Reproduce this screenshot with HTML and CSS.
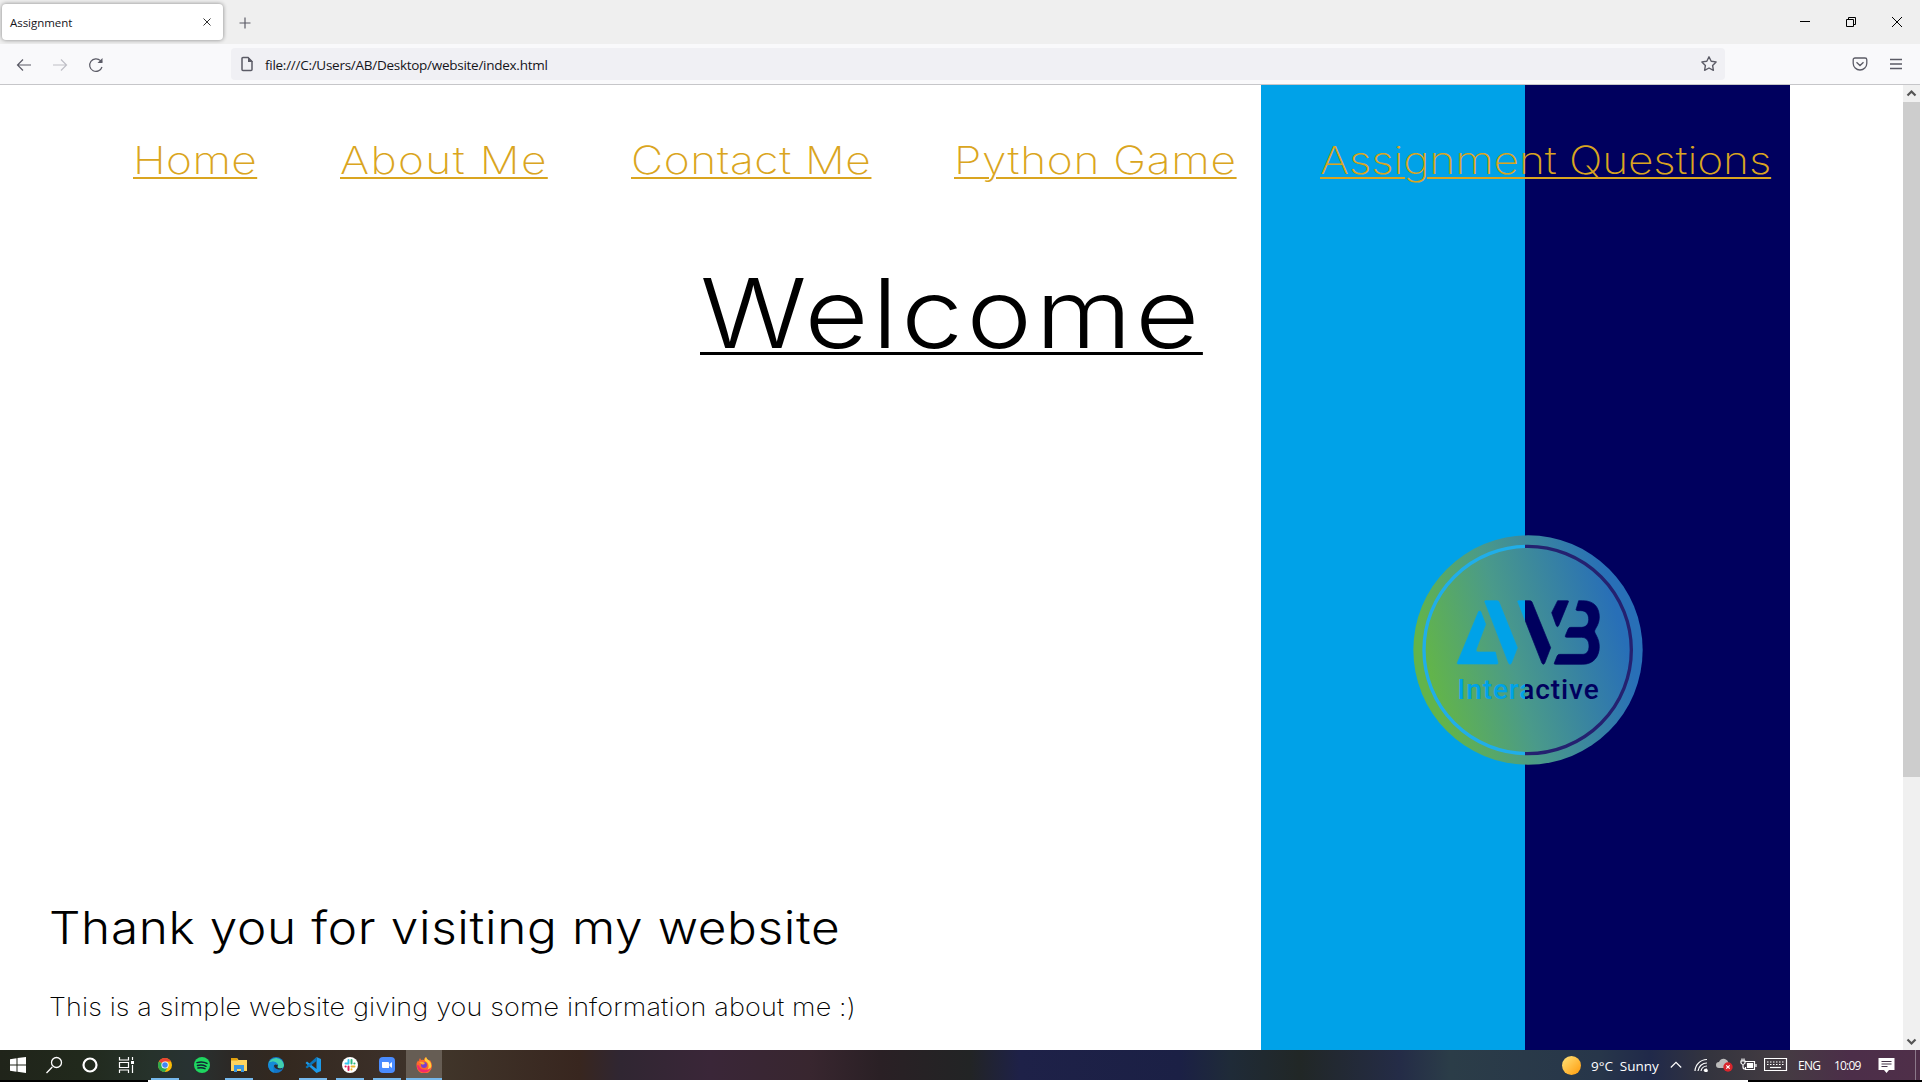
FILE: index.html
```html
<!DOCTYPE html>
<html lang="en">
<head>
<meta charset="utf-8">
<title>Assignment</title>
<link rel="stylesheet" href="styles.css">
</head>
<body>
<div class="screen">
  <header class="tabbar">
    <div class="tab"><span>Assignment</span>
      <svg width="10" height="10" viewBox="0 0 10 10" class="line dark"><path d="M1.5 1.5l7 7M8.500 1.500l-7 7"/></svg>
    </div>
    <svg class="newtab line" width="12" height="12" viewBox="0 0 12 12"><path d="M6 .5v11M.5 6h11"/></svg>
    <div class="winctl">
      <svg width="12" height="12" viewBox="0 0 12 12"><path d="M1 5.500h10"/></svg>
      <svg width="12" height="12" viewBox="0 0 12 12"><path d="M1.500 3.500h7v7h-7zM3.500 3.500v-2h7v7h-2"/></svg>
      <svg width="12" height="12" viewBox="0 0 12 12"><path d="M1 1l10 10M11 1L1 11"/></svg>
    </div>
  </header>
  <div class="toolbar">
    <div class="navbtns">
      <svg class="line" width="16" height="16" viewBox="0 0 16 16"><path d="M15 8H1.500M7 2.500L1.500 8 7 13.500"/></svg>
      <svg class="line off" width="16" height="16" viewBox="0 0 16 16"><path d="M1 8h13.500M9 2.500L14.500 8 9 13.500"/></svg>
      <svg class="line" width="16" height="16" viewBox="0 0 16 16"><path d="M14 10a6.300 6.300 0 1 1-1.500-6.300L14 5"/><path d="M14.500 1v5h-5z" fill="#5b5b66" stroke="none"/></svg>
    </div>
    <div class="urlbar">
      <svg class="line" width="14" height="16" viewBox="0 0 14 16"><path d="M3 1.500h5L12 5.500v8a1 1 0 0 1-1 1H3a1 1 0 0 1-1-1v-11a1 1 0 0 1 1-1z" stroke-width="1.500"/><path d="M8 1v5h5z" fill="#5b5b66" stroke="none"/></svg>
      <span>file:///C:/Users/AB/Desktop/website/index.html</span>
      <svg class="line star" width="18" height="18" viewBox="0 0 18 18"><path d="M9 1.800l2.200 4.400 4.900.7-3.500 3.500.8 4.900-4.400-2.300-4.400 2.300.8-4.900L1.900 6.900l4.900-.7z" stroke-width="1.400" stroke-linejoin="round"/></svg>
    </div>
    <div class="tools">
      <svg class="line" width="16" height="16" viewBox="0 0 16 16"><path d="M3 2h10a1.800 1.800 0 0 1 1.800 1.800v3.400a6.800 6.800 0 0 1-13.600 0V3.800A1.800 1.800 0 0 1 3 2zM4.500 6.200L8 9.500l3.500-3.300" stroke-width="1.300"/></svg>
      <svg class="line" width="14" height="16" viewBox="0 0 14 16"><path d="M1 3.500h12M1 8h12M1 12.500h12" stroke-width="1.400"/></svg>
    </div>
  </div>
  <div class="viewport">
    <main class="page">
      <nav class="menu">
        <a class="m1">Home</a><a class="m2">About Me</a><a class="m3">Contact Me</a><a class="m4">Python Game</a><a class="m5">Assignment Questions</a>
      </nav>
      <h1>Welcome</h1>
      <svg class="logo" width="280" height="280" viewBox="0 0 840 840">
        <defs>
          <linearGradient id="disc" gradientUnits="userSpaceOnUse" x1="125" y1="500" x2="690" y2="345"><stop offset="0" stop-color="#62b44b"/><stop offset=".42" stop-color="#4a9a8a"/><stop offset="1" stop-color="#286fb7"/></linearGradient>
          <linearGradient id="split" gradientUnits="userSpaceOnUse" x1="0" y1="0" x2="840" y2="0"><stop offset=".4828" stop-color="#00a2e8"/><stop offset=".4828" stop-color="#00005e"/></linearGradient>
          <linearGradient id="ring" gradientUnits="userSpaceOnUse" x1="0" y1="0" x2="840" y2="0"><stop offset=".4828" stop-color="#20aee9"/><stop offset=".4828" stop-color="#242170"/></linearGradient>
        </defs>
        <circle cx="414" cy="420" r="344" fill="url(#disc)"/>
        <circle cx="413" cy="420" r="311" fill="none" stroke="url(#ring)" stroke-width="10"/>
        <g fill="url(#split)" stroke="url(#split)" stroke-width="2" stroke-linejoin="round">
          <path d="M266 304h6l15 39-28 74q-3 9 7 9h50l8 33q0 3-3 3H203q-2-1-1-4z"/>
          <path d="M284 274q0-2 4-2h32q5 0 7 4l55 137-18 47q-4 6-8 0z"/>
          <path d="M383 274q0-2 4-2h32q5 0 7 4l56 137-18 47q-4 6-8 0z"/>
          <path d="M503 272h30q4 0 2 4l-29 71q-4 6-7 0l-14-39z"/>
          <path d="M566 272h12c38 0 50 24 50 49 0 24-14 35-14 43 0 8 14 20 14 46 0 30-18 53-50 53h-82q-5 0-3-4l8-20q2-6 8-6h68c14 0 20-10 20-25 0-16-8-26-23-26h-44q-6 0-4-5l8-19q2-6 8-6h32c16 0 22-11 22-24 0-17-9-26-24-26h-8q-5 0-6-3z"/>
        </g>
        <text x="202" y="566" textLength="424" font-size="84" font-weight="500" fill="url(#split)">Interactive</text>
      </svg>
      <h2>Thank you for visiting my website</h2>
      <p>This is a simple website giving you some information about me :)</p>
    </main>
    <aside class="scroll">
      <svg width="17" height="17" viewBox="0 0 17 17"><path d="M4.500 10.500l4-4 4 4"/></svg>
      <div class="thumb"></div>
      <svg class="down" width="17" height="17" viewBox="0 0 17 17"><path d="M4.500 6.500l4 4 4-4"/></svg>
    </aside>
  </div>
  <footer class="taskbar">
    <div class="apps">
      <i class="sys"><svg width="16" height="16" viewBox="0 0 16 16"><path fill="#fff" d="M0 2.300l6.500-1v6.200H0zM7.500 1.100L16 0v7.500H7.500zM0 8.500h6.500v6.200L0 13.700zM7.500 8.500H16V16l-8.500-1.200z"/></svg></i>
      <i class="sys"><svg width="18" height="18" viewBox="0 0 18 18"><path d="M7.300 11L1.500 17M11.500 1.500a5 5 0 1 1 0 10 5 5 0 0 1 0-10z" stroke="#fff" stroke-width="1.300" fill="none"/></svg></i>
      <i class="sys"><svg width="16" height="16" viewBox="0 0 16 16"><circle cx="8" cy="8" r="6.500" stroke="#fff" stroke-width="2.200" fill="none"/></svg></i>
      <i class="sys"><svg width="17" height="16" viewBox="0 0 17 16"><path d="M1.500 0v3h9V0M1.500 16v-3h9v3M1.500 5.500h9v5h-9zM14.500 0v3M14.500 8v8" stroke="#fff" stroke-width="1.200" fill="none"/><path d="M13 4h3v3h-3z" fill="#fff"/></svg></i>
      <i class="on chrome"><svg width="16" height="16" viewBox="0 0 16 16"><circle cx="8" cy="8" r="7" fill="#fbbc05"/><path d="M8 8L2 4.300A7 7 0 0 1 14 4.500H8z" fill="#e94235"/><path d="M1.900 4.500A7 7 0 0 0 7.700 15L11 10 8 8z" fill="#2da94f"/><circle cx="8" cy="8" r="3.600" fill="#fff"/><circle cx="8" cy="8" r="2.800" fill="#4285f4"/></svg></i>
      <i><svg width="16" height="16" viewBox="0 0 16 16"><circle cx="8" cy="8" r="8" fill="#1ed760"/><path d="M3 5.600q5.500-1.600 10 .8M3.500 8.500q4.500-1.300 8.500.8M4 11q4-1 7 .7" stroke="#123" stroke-width="1.500" fill="none" stroke-linecap="round"/></svg></i>
      <i class="on"><svg width="16" height="16" viewBox="0 0 16 16"><path d="M0 1h6l1.500 2H16v11H0z" fill="#ffd45e"/><path d="M0 1h6l1 2.500H0z" fill="#e2a00c"/><path d="M3 8h10v7h-3v-3H6v3H3z" fill="#3b97e0"/></svg></i>
      <i><svg width="16" height="16" viewBox="0 0 16 16"><circle cx="8" cy="8" r="8" fill="#1375c8"/><path d="M.3 7A8 8 0 0 1 16 8c0 3-3 4-6 3-1-1 1-2-.5-4C7 4 2 4 .3 7z" fill="#41cfae"/><path d="M6.500 7c-1.500 3 1 6 7 5.500l1-1.500c-3 1-6 0-5-2 .5-1 .5-2-3-2z" fill="#2c2a27"/><path d="M.2 7C3 3 9 4 9.800 8 6 6 4 9 6.500 15.800A8 8 0 0 1 .2 7z" fill="#158bd7"/></svg></i>
      <i class="on"><svg width="17" height="16" viewBox="0 0 17 16"><path d="M11.500 0l4.500 2v12l-4.500 2L.5 6 2 4.500 11.500 12z" fill="#1d9ae8"/><path d="M11.500 0v4L2 11.500.5 10z" fill="#0876bd"/></svg></i>
      <i class="on"><svg width="16" height="16" viewBox="0 0 16 16"><circle cx="8" cy="8" r="8" fill="#fff"/><g stroke-width="2" stroke-linecap="round"><path d="M6.500 3v3.500" stroke="#36c5f0"/><path d="M3.500 6.500H6" stroke="#36c5f0"/><path d="M9.500 3v3.500M12.500 6.500h-.2" stroke="#2eb67d"/><path d="M9.500 9.500h3M9.500 12.500v-.2" stroke="#ecb22e"/><path d="M6.500 9.500V13M3.500 9.500h.2" stroke="#e01e5a"/></g></svg></i>
      <i class="on"><svg width="16" height="16" viewBox="0 0 16 16"><rect width="16" height="16" rx="4" fill="#4a8cff"/><path d="M3 5h6q1 0 1 1v5H4q-1 0-1-1zM10.500 7L13 5v6l-2.500-2z" fill="#fff"/></svg></i>
      <i class="on active"><svg width="17" height="16" viewBox="0 0 17 16"><path d="M4 1l1 2q1.500-.5 3 0 0-2 2-3 .5 2 3 3.500l1-.5q2 3 2 6a7.500 7.500 0 0 1-15.500-.3Q.500 5 2 3.500l1 1Q3 2 4 1z" fill="#ff6a2b"/><path d="M10 0q.5 2 3 3.500 3 3 2 7-2 4-6 4 4-2 3.500-6Q12 5 9 4q-1-2 1-4z" fill="#ffcf3a"/><path d="M1 8q0 6 6 7.500 6 .5 8-5-3 3-7 2-4 0-5-4z" fill="#f5296b"/><circle cx="8" cy="8" r="3" fill="#7a3fd0"/><path d="M3 5q3-1 6 1-1 2-3 1.500z" fill="#ffad2b"/></svg></i>
    </div>
    <div class="tray">
      <b class="sun"></b>
      <span class="weather">9°C&ensp;Sunny</span>
      <svg class="chev" width="12" height="8" viewBox="0 0 12 8"><path d="M.8 6.500L6 1.300l5.200 5.200"/></svg>
      <svg class="wifi" width="14" height="14" viewBox="0 0 14 14"><path d="M1 13A12 12 0 0 1 13 1.500M4 13a9 9 0 0 1 9-8M7 13a6 6 0 0 1 6-5M10 13a3 3 0 0 1 3-2"/><circle cx="12" cy="12.500" r="1.200" fill="#fff"/></svg>
      <svg class="cloud" width="17" height="14" viewBox="0 0 17 14"><path d="M3 10a3 3 0 0 1 0-6q2-4 6-3 3 1 3.500 4 3 1 2 5z" fill="#bcbcbc" stroke="none"/><circle cx="12" cy="9" r="4.700" fill="#d9252c" stroke="none"/><path d="M10.300 7.300l3.400 3.400M13.700 7.300l-3.400 3.400"/></svg>
      <svg class="battery" width="17" height="14" viewBox="0 0 17 14"><path d="M5.500 3.500h9v8h-9V9M16 6v3M1 3h4v2q-2 3-4 0zM2 3V.500M4 3V.500M3 6v3q0 2 2 2"/><path d="M7.500 5.500h5v4h-5z" fill="#fff"/></svg>
      <svg class="keys" width="24" height="14" viewBox="0 0 24 14"><path d="M.5.5h22v12H.5z"/><path d="M3 4h17M3 6.500h17" stroke-dasharray="1.500 1.500"/><path d="M6 9.500h11"/></svg>
      <span class="lang">ENG</span><span class="clock">10:09</span>
      <svg class="note" width="17" height="17" viewBox="0 0 17 17"><path d="M.5 1h16v12H11l-2.500 3L6 13H.500z" fill="#fff" stroke="none"/><path d="M3.500 4.500h10M3.500 7h10M3.500 9.500h6" stroke="#46364a"/></svg>
    </div>
  </footer>
</div>
</body>
</html>
```
FILE: styles.css
```css
* { box-sizing: border-box; }
body { margin: 0; background: #fff; overflow: hidden; }
svg { display: block; flex: none; }
.screen {
  width: 1922px; height: 1082px;
  display: flex; flex-direction: column;
  font-family: "Open Sans", "Noto Sans", sans-serif;
  background: linear-gradient(90deg, #000 148px, #fff 148px 1748px, #000 1748px) 0 1080px / 1922px 2px no-repeat #fff;
}
.line { fill: none; stroke: #5b5b66; stroke-width: 1.2; }
.line.dark { stroke: #333; stroke-width: 1; }
.line.off { stroke: #bfbfc6; }

.tabbar { width: 1920px; height: 44px; background: #efefef; display: flex; align-items: flex-start; }
.tab {
  width: 221px; height: 36px; margin: 4px 0 0 2px; padding: 0 11px 0 8px;
  display: flex; align-items: center; justify-content: space-between;
  background: #fff; border-radius: 4px; box-shadow: 0 0 4px rgba(0,0,0,.45);
  font-size: 11.500px; letter-spacing: -.05px; color: #15141a;
}
.newtab { margin: 17px 0 0 16px; }
.winctl { margin: 16px 17px 0 auto; display: flex; gap: 34px; }
.winctl svg { fill: none; stroke: #000; stroke-width: 1; }

.toolbar { width: 1920px; height: 41px; background: #f9f9fb; border-bottom: 1px solid #c6c6c9; display: flex; align-items: center; }
.navbtns { width: 231px; padding: 1px 0 0 16px; display: flex; gap: 20px; }
.urlbar {
  width: 1494px; height: 32px; padding: 0 7px 0 9px; background: #f0f0f4; border-radius: 4px;
  display: flex; align-items: center; gap: 11px; font-size: 13.500px; color: #15141a; letter-spacing: -.27px;
}
.urlbar span { padding-top: 1px; }
.star { margin-left: auto; }
.tools { margin-left: 127px; display: flex; gap: 21px; }

.viewport { width: 1920px; height: 965px; display: flex; }
.page {
  width: 1903px; height: 965px; overflow: hidden;
  font-family: Inter, sans-serif; font-weight: 200; color: #000;
  background: linear-gradient(90deg, #fff 1260.500px, #00a2e8 1260.500px 1525px, #00005e 1525px 1789.500px, #fff 1790px);
}
.menu {
  display: flex; gap: 83px; height: 100px; padding: 51px 0 0 133px;
  font-size: 38.500px; font-weight: 200; line-height: 48px; color: #daa520; white-space: nowrap;
}
.menu a { text-decoration: underline 2px; text-underline-offset: 3px; transform: scaleX(1.15); transform-origin: left; }
.m1 { width: 124px; letter-spacing: .35px; }
.m2 { width: 208px; letter-spacing: 1.200px; }
.m3 { width: 240px; letter-spacing: .57px; }
.m4 { width: 283px; letter-spacing: .6px; }
.m5 { width: 451px; letter-spacing: -.1px; }
h1 {
  margin: 68px 0 0 700px; height: 172px; font-size: 96px; line-height: 120px; font-weight: 300;
  letter-spacing: 3.050px; text-decoration: underline 3px; text-underline-offset: 4px;
  transform: scaleX(1.15); transform-origin: left;
}
.logo { margin: 85px 0 0 1390px; font-family: Roboto, sans-serif; }
h2 {
  margin: 108px 0 0 49px; font-size: 45px; line-height: 60px; font-weight: 300; letter-spacing: .58px;
  white-space: nowrap; transform: scaleX(1.1); transform-origin: left;
}
p {
  margin: 33px 0 0 49px; font-size: 25px; line-height: 32px; letter-spacing: .12px;
  white-space: nowrap; transform: scaleX(1.08); transform-origin: left;
}

.scroll { width: 17px; background: #f0f0f0; display: flex; flex-direction: column; }
.scroll path { fill: none; stroke: #555; stroke-width: 2.200; }
.thumb { height: 675px; background: #cdcdcd; }
.down { margin-top: auto; }

.taskbar {
  width: 1920px; height: 30px; display: flex; justify-content: space-between; color: #fff;
  background: linear-gradient(90deg, #20241a 0, #21291c 80px, #26322b 150px, #283232 190px, #2c2926 230px, #33281f 280px, #3b2f28 380px, #40352a 440px, #38261f 580px, #302632 620px, #3a2638 710px, #38262f 810px, #2a2025 880px, #222425 970px, #1e2148 1020px, #1b2045 1180px, #1f2b38 1230px, #212726 1300px, #242c47 1400px, #2b3d48 1450px, #27364a 1600px, #20294a 1650px, #34343e 1710px, #443c42 1780px, #4c2e49 1850px, #4f2f49 1915px, #8b7889 1915px 1916px, #4f2f49 1916px);
}
.apps { display: flex; }
.apps i { width: 28px; height: 30px; margin-right: 9px; display: flex; align-items: center; justify-content: center; }
.apps .sys { width: 36px; margin-right: 0; }
.apps .chrome { margin-left: 7px; }
.apps .on { box-shadow: inset 0 -2px #76b9ed; }
.apps .active { width: 36px; margin-left: -4px; background: #665d54; }
.tray { display: flex; align-items: center; padding-right: 25px; }
.tray svg { fill: none; stroke: #fff; stroke-width: 1.200; }
.sun { width: 19px; height: 19px; border-radius: 50%; background: linear-gradient(135deg, #ffe37a, #ff9a0a); }
.weather { width: 70px; margin-left: 10px; padding-top: 1px; font-size: 13.500px; letter-spacing: 0; white-space: nowrap; }
.chev { margin-left: 9px; }
.wifi { margin-left: 12px; }
.cloud { margin-left: 8px; }
.battery { margin-left: 7px; }
.keys { margin-left: 7px; }
.lang { width: 24px; margin-left: 10px; font-size: 12px; letter-spacing: -.7px; }
.clock { width: 28px; margin-left: 12px; font-size: 12px; letter-spacing: -.8px; }
.note { margin-left: 16px; }
```
